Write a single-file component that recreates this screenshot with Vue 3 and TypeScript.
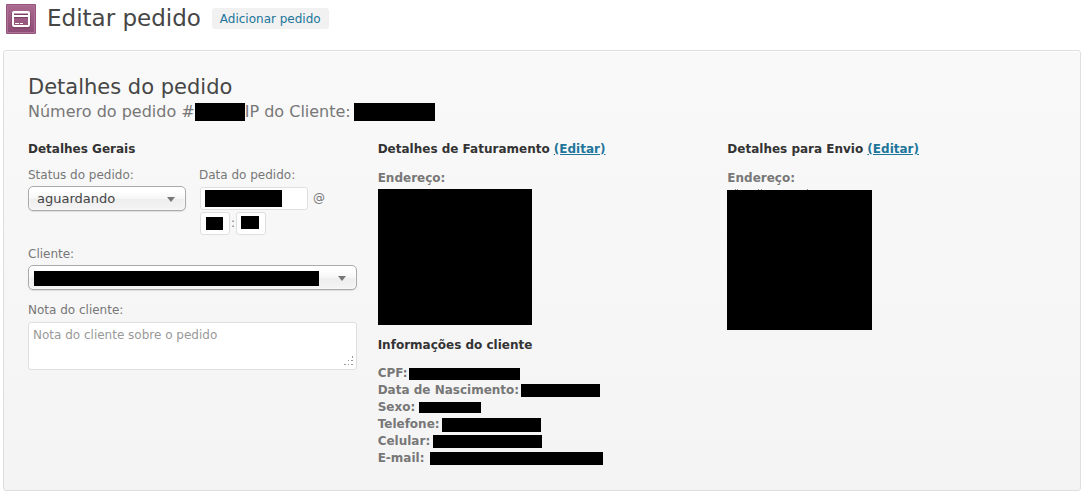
<script setup lang="ts">
import { ref } from 'vue'

interface Field {
  label: string
  key: string
}

const status = ref('aguardando')
const customer = ref('')
const note = ref('')

const customerFields: Field[] = [
  { label: 'CPF:', key: 'cpf' },
  { label: 'Data de Nascimento:', key: 'birth' },
  { label: 'Sexo:', key: 'sex' },
  { label: 'Telefone:', key: 'phone' },
  { label: 'Celular:', key: 'mobile' },
  { label: 'E-mail:', key: 'email' },
]
</script>

<template>
  <div class="page">
    <header class="page-header">
      <svg class="order-icon" viewBox="0 0 30 30" aria-hidden="true">
        <defs>
          <linearGradient id="icon-fill" x1="0" y1="0" x2="0" y2="1">
            <stop offset="0" stop-color="#a9698f" />
            <stop offset="1" stop-color="#8d4d76" />
          </linearGradient>
        </defs>
        <rect width="30" height="30" rx="1" fill="#94557d" />
        <rect x="1" y="1" width="28" height="28" fill="#ae7297" />
        <rect x="2" y="2" width="26" height="26" fill="url(#icon-fill)" />
        <rect x="6" y="8" width="18" height="16" rx="2" fill="none" stroke="#7a4065" />
        <rect x="7" y="8" width="16" height="14" rx="1" fill="none" stroke="#fff" stroke-width="2" />
        <rect x="8" y="9" width="14" height="1" fill="#c9a3ba" />
        <rect x="8" y="10" width="14" height="1" fill="#7a4065" />
        <rect x="8" y="11" width="14" height="2" fill="#fff" />
        <rect x="8" y="13" width="14" height="1" fill="#7a4065" />
        <path d="M9 19.5h4M14 19.5h2M16 19.5h1" stroke="#fff" />
      </svg>
      <h1>Editar pedido</h1>
      <a class="add-new" href="#">Adicionar pedido</a>
    </header>

    <main class="panel">
      <h2>Detalhes do pedido</h2>
      <p class="order-number">
        <span>Número do pedido #</span><span class="redacted order-id"></span>
        <span>IP do Cliente:</span><span class="redacted order-ip"></span>
      </p>

      <div class="columns">
        <section class="general">
          <h4>Detalhes Gerais</h4>
          <div class="pair">
            <div class="field">
              <label for="status">Status do pedido:</label>
              <div class="select-box">
                <select id="status" v-model="status">
                  <option value="aguardando">aguardando</option>
                </select>
              </div>
            </div>
            <div class="field">
              <label for="date">Data do pedido:</label>
              <div class="date-row">
                <input id="date" class="date" type="text" />
                <span class="at">@</span>
              </div>
              <div class="time-row">
                <input class="time hour" type="text" aria-label="Hora" />
                <span class="colon">:</span>
                <input class="time minute" type="text" aria-label="Minuto" />
              </div>
            </div>
          </div>
          <div class="field customer">
            <label for="customer">Cliente:</label>
            <div class="select-box">
              <select id="customer" v-model="customer">
                <option value=""></option>
              </select>
              <span class="redacted customer-name"></span>
            </div>
          </div>
          <div class="field note">
            <label for="note">Nota do cliente:</label>
            <div class="note-box">
              <textarea id="note" v-model="note" placeholder="Nota do cliente sobre o pedido"></textarea>
              <svg class="grip" viewBox="0 0 10 10" aria-hidden="true">
                <path d="M8 0h1v2h-1zM4 4h1v1h-1zM7 4h2v1h-2zM0 8h2v1h-2zM4 8h1v1h-1zM7 8h2v1h-2z" fill="#999" />
              </svg>
            </div>
          </div>
        </section>

        <section>
          <h4>Detalhes de Faturamento <a href="#">(Editar)</a></h4>
          <p class="address-label">Endereço:</p>
          <div class="redacted billing"></div>
          <h4 class="info-title">Informações do cliente</h4>
          <ul>
            <li v-for="field in customerFields" :key="field.key">
              <span>{{ field.label }}</span><span class="redacted" :class="field.key"></span>
            </li>
          </ul>
        </section>

        <section>
          <h4>Detalhes para Envio <a href="#">(Editar)</a></h4>
          <p class="address-label">Endereço:</p>
          <div class="redacted shipping">
            <svg class="ascenders" viewBox="0 0 100 1" aria-hidden="true">
              <path d="M8 0h1v1h-1zM10 0h1v1h-1zM31 0h1v1h-1zM34 0h1v1h-1zM80 0h1v1h-1z" fill="#888" />
            </svg>
          </div>
        </section>
      </div>
    </main>
  </div>
</template>

<style>
body {
  background: #fff;
}
</style>

<style scoped>
* {
  box-sizing: border-box;
}

.page {
  font-family: "DejaVu Sans", sans-serif;
  font-size: 12px;
  line-height: 17px;
  color: #777;
  padding: 4px 2px 2px 3px;
}

h1, h2, h4, p, ul {
  margin: 0;
  padding: 0;
  font-weight: normal;
}

a {
  color: #21759b;
}

.page-header {
  display: flex;
  align-items: flex-start;
  height: 46px;
  padding-left: 3px;
}

.order-icon {
  width: 30px;
  height: 30px;
  margin-right: 11px;
}

h1 {
  font-size: 23px;
  line-height: 29px;
  color: #464646;
}

.add-new {
  margin: 4px 0 0 11px;
  padding: 3px 8px 1px;
  border-radius: 3px;
  background: #f1f1f1;
  text-decoration: none;
}

.panel {
  border: 1px solid #dfdfdf;
  border-radius: 3px;
  padding: 24px 24px 23px;
  background: linear-gradient(#f9f9f9, #f4f4f4);
  box-shadow: inset 0 1px 0 #fff;
}

h2 {
  font-size: 21px;
  line-height: 25px;
  color: #464646;
}

.redacted {
  display: block;
  flex: none;
  background: #000;
}

.order-number {
  display: flex;
  align-items: center;
  font-size: 16px;
  line-height: 24px;
}

.order-id {
  width: 50px;
  height: 18px;
}

.order-ip {
  width: 81px;
  height: 18px;
  margin-left: 3px;
}

.columns {
  display: grid;
  grid-template-columns: repeat(3, minmax(0, 1fr));
  gap: 21px;
  margin-top: 17px;
}

h4 {
  font-size: 12px;
  font-weight: bold;
  line-height: 17px;
  color: #333;
}

.pair {
  display: grid;
  grid-template-columns: 158px 1fr;
  gap: 13px;
  margin-top: 9px;
}

.field label {
  display: block;
  line-height: 17px;
}

.select-box {
  position: relative;
  margin-top: 2px;
}

.select-box::after {
  content: "";
  position: absolute;
  right: 11px;
  top: 11px;
  border: 4px solid transparent;
  border-top: 5px solid #777;
  border-bottom: 0;
}

select {
  display: block;
  appearance: none;
  width: 100%;
  height: 25px;
  padding: 0 24px 0 8px;
  border: 1px solid #aaa;
  border-radius: 5px;
  background: linear-gradient(#fff 20%, #f6f6f6 50%, #eee 52%, #f4f4f4 100%);
  box-shadow: inset 0 0 3px #fff, 0 1px 1px rgba(0, 0, 0, 0.1);
  font: 13px "DejaVu Sans", sans-serif;
  color: #444;
}

input,
textarea {
  display: block;
  border: 1px solid #dfdfdf;
  border-radius: 3px;
  background-color: #fff;
  font: 12px/17px "DejaVu Sans", sans-serif;
  color: #333;
}

input {
  height: 23px;
  background-image: linear-gradient(#000, #000);
  background-repeat: no-repeat;
}

.date-row,
.time-row {
  display: flex;
  align-items: center;
  padding-left: 1px;
}

.date-row {
  margin-top: 3px;
}

.time-row {
  margin-top: 2px;
}

.date {
  width: 108px;
  background-position: 4px 2px;
  background-size: 77px 17px;
}

.at {
  margin-left: 5px;
}

.time {
  width: 30px;
}

.hour {
  background-position: 5px 4px;
  background-size: 17px 13px;
}

.minute {
  background-position: 4px 3px;
  background-size: 18px 13px;
}

.colon {
  width: 6px;
  text-align: center;
}

.customer {
  margin-top: 11px;
}

.customer-name {
  position: absolute;
  left: 6px;
  top: 6px;
  width: 285px;
  height: 15px;
  pointer-events: none;
}

.note {
  margin-top: 12px;
}

.note-box {
  position: relative;
  margin-top: 3px;
}

textarea {
  width: 100%;
  height: 48px;
  padding: 4px;
  resize: none;
}

textarea::placeholder {
  color: #999;
  opacity: 1;
}

.grip {
  position: absolute;
  right: 3px;
  bottom: 4px;
  width: 10px;
  height: 10px;
}

.address-label {
  margin-top: 12px;
  font-weight: bold;
}

.billing {
  width: 154px;
  height: 136px;
  margin-top: 2px;
}

.shipping {
  position: relative;
  width: 145px;
  height: 140px;
  margin-top: 3px;
}

.ascenders {
  position: absolute;
  left: 0;
  top: -1px;
  width: 100px;
  height: 1px;
}

.info-title {
  margin-top: 12px;
}

ul {
  list-style: none;
  margin-top: 11px;
}

li {
  display: flex;
  align-items: center;
  height: 17px;
  font-weight: bold;
}

.cpf {
  width: 111px;
  height: 12px;
  margin-left: 1px;
}

.birth {
  width: 79px;
  height: 13px;
  margin-left: 2px;
}

.sex {
  width: 62px;
  height: 11px;
  margin-left: 4px;
}

.phone {
  width: 99px;
  height: 14px;
  margin-left: 2px;
}

.mobile {
  width: 109px;
  height: 13px;
  margin-left: 3px;
}

.email {
  width: 173px;
  height: 13px;
  margin-left: 6px;
}
</style>
